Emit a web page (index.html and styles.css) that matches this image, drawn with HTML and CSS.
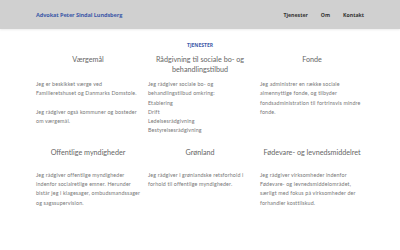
FILE: index.html
```html
<!DOCTYPE html>
<html lang="da">
<head>
  <meta charset="UTF-8" />
  <meta name="viewport" content="width=device-width, initial-scale=1" />
  <title>Advokat Peter Sindal Lundsberg</title>
  <link rel="stylesheet" href="styles.css">
</head>
<body>

<header class="topbar">
  <div class="topbar-inner">
    <a class="brand" href="#">Advokat Peter Sindal Lundsberg</a>
    <nav class="menu">
      <a href="#">Tjenester</a>
      <a href="#">Om</a>
      <a href="#">Kontakt</a>
    </nav>
  </div>
</header>

<section class="services">
  <h2 class="section-title">TJENESTER</h2>

  <div class="grid">
    <div class="service">
      <h3>Værgemål</h3>
      <p>Jeg er beskikket værge ved Familieretshuset og Danmarks Domstole.</p>
      <p class="gap">Jeg rådgiver også kommuner og bosteder om værgemål.</p>
    </div>
    <div class="service">
      <h3>Rådgivning til sociale bo- og behandlingstilbud</h3>
      <p>Jeg rådgiver sociale bo- og behandlingstilbud omkring:</p>
      <p>Etablering</p>
      <p>Drift</p>
      <p>Ledelsesrådgivning</p>
      <p>Bestyrelsesrådgivning</p>
    </div>
    <div class="service">
      <h3>Fonde</h3>
      <p>Jeg administrer en række sociale almennyttige fonde, og tilbyder fondsadministration til fortrinsvis mindre fonde.</p>
    </div>

    <div class="service short">
      <h3>Offentlige myndigheder</h3>
      <p>Jeg rådgiver offentlige myndigheder indenfor socialretlige emner. Herunder bistår jeg i klagesager, ombudsmandssager og sagssupervision.</p>
    </div>
    <div class="service short">
      <h3>Grønland</h3>
      <p>Jeg rådgiver i grønlandske retsforhold i forhold til offentlige myndigheder.</p>
    </div>
    <div class="service short">
      <h3>Fødevare- og levnedsmiddelret</h3>
      <p>Jeg rådgiver virksomheder indenfor Fødevare- og levnedsmiddelområdet, særligt med fokus på virksomheder der forhandler kosttilskud.</p>
    </div>
  </div>
</section>

</body>
</html>
```

FILE: styles.css
```css
body {
  font-family: Lato, "Open Sans", sans-serif;
  background: #fff;
  margin: 0; padding: 0;
}
a {
  text-decoration: none;
}
.topbar {
  background: #d0d0d0;
  height: 29px;
  box-shadow: 0 1px 2px rgba(0,0,0,0.08);
}
.topbar-inner {
  height: 100%;
  padding: 0 36px;
  display: flex;
  align-items: center;
  justify-content: space-between;
}
.brand {
  font-family: "Open Sans", sans-serif;
  font-weight: bold;
  font-size: 5.6px;
  color: #3d5aa8;
  letter-spacing: -0.1px;
}
.menu {
  display: flex;
  gap: 13px;
}
.menu a {
  font-family: "Open Sans", sans-serif;
  font-weight: bold;
  font-size: 5.2px;
  color: #333;
}
.services {
  max-width: 336px;
  margin: 0 auto;
  padding-top: 13px;
}
.section-title {
  margin: 0;
  text-align: center;
  font-family: "Open Sans", sans-serif;
  font-weight: bold;
  font-size: 5px;
  color: #3d5aa8;
}
.grid {
  display: grid;
  grid-template-columns: repeat(3, 1fr);
  row-gap: 12px;
  margin-top: 7px;
}
.service {
  padding: 0 4px;
}
.service h3 {
  margin: 0 0 6px;
  height: 19px;
  font-weight: normal;
  font-size: 7.2px;
  line-height: 9.5px;
  color: #666;
  text-align: center;
}
.service.short h3 {
  height: 17px;
}
.service p {
  margin: 0;
  font-size: 5.3px;
  line-height: 9.3px;
  letter-spacing: 0.15px;
  color: #777;
}
.service p.gap {
  margin-top: 9px;
}
```
